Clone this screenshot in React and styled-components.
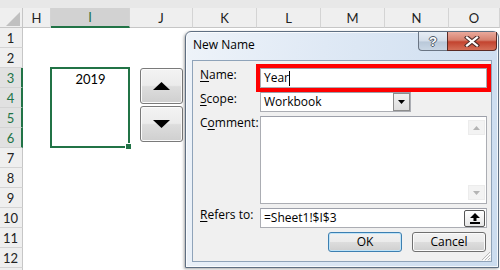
import React from 'react';
import styled, { createGlobalStyle } from 'styled-components';

const GREEN = '#217346';

const columns = [
    { name: 'H', width: '28px' },
    { name: 'I', width: '79px', selected: true },
    { name: 'J', width: '63px' },
    { name: 'K', width: '64px' },
    { name: 'L', width: '64px' },
    { name: 'M', width: '64px' },
    { name: 'N', width: '64px' },
    { name: 'O', width: '1fr' },
];
const rows = Array.from({ length: 12 }, (_, i) => i + 1);
const isSelectedRow = (r) => r >= 3 && r <= 6;

function App() {
    return (
        <Screen>
            <GlobalStyle />
            <Sheet $cols={columns.map((c) => c.width).join(' ')}>
                <TopBand />
                <Corner>
                    <svg width="14" height="14" viewBox="0 0 14 14">
                        <polygon points="14,0 14,14 0,14" fill="#c0c0c0" />
                    </svg>
                </Corner>
                {columns.map((c) => (
                    <ColHeader key={c.name} $selected={c.selected}>{c.name}</ColHeader>
                ))}
                {rows.map((r) => (
                    <RowHeader key={r} $row={r + 2} $selected={isSelectedRow(r)}>{r}</RowHeader>
                ))}
                <RowHeader $row={15} />
                <Cell $col={3} $row={5}>2019</Cell>
                <Selection $col={3} $row={5} $span={4}>
                    <FillHandle />
                </Selection>
            </Sheet>

            <Spinner>
                <SpinButton>
                    <svg width="17" height="8" viewBox="0 0 17 8"><polygon points="8.5,0 17,8 0,8" fill="#000" /></svg>
                </SpinButton>
                <SpinButton>
                    <svg width="17" height="8" viewBox="0 0 17 8"><polygon points="0,0 17,0 8.5,8" fill="#000" /></svg>
                </SpinButton>
            </Spinner>

            <Window>
                <TitleBar>
                    <Title>New Name</Title>
                    <Caption>
                        <HelpButton>?</HelpButton>
                        <CloseButton>
                            <svg width="16" height="11" viewBox="0 0 16 11">
                                <path d="M3 1.5 L13 9.5 M13 1.5 L3 9.5" stroke="#4b2b28" strokeWidth="4.2" strokeLinecap="square" />
                                <path d="M3 1.5 L13 9.5 M13 1.5 L3 9.5" stroke="#fff" strokeWidth="2.2" strokeLinecap="square" />
                            </svg>
                        </CloseButton>
                    </Caption>
                </TitleBar>
                <Client>
                    <Form>
                        <Label><u>N</u>ame:</Label>
                        <TextBox $highlight>
                            <span>Year</span><Caret />
                        </TextBox>

                        <Label><u>S</u>cope:</Label>
                        <Select>
                            <span>Workbook</span>
                            <DropButton>
                                <svg width="7" height="4" viewBox="0 0 7 4"><polygon points="0,0 7,0 3.5,4" fill="#000" /></svg>
                            </DropButton>
                        </Select>

                        <Label>C<u>o</u>mment:</Label>
                        <TextArea>
                            <Scrollbar>
                                <ScrollArrow>
                                    <svg width="7" height="4" viewBox="0 0 7 4"><polygon points="3.5,0 7,4 0,4" fill="#b4b4b4" /></svg>
                                </ScrollArrow>
                                <ScrollArrow>
                                    <svg width="7" height="4" viewBox="0 0 7 4"><polygon points="0,0 7,0 3.5,4" fill="#b4b4b4" /></svg>
                                </ScrollArrow>
                            </Scrollbar>
                        </TextArea>

                        <Label><u>R</u>efers to:</Label>
                        <TextBox>
                            <span>=Sheet1!$I$3</span>
                            <CollapseButton>
                                <svg width="10" height="11" viewBox="0 0 10 11">
                                    <polygon points="5,0 10,5 6.5,5 6.5,8 3.5,8 3.5,5 0,5" fill="#000" />
                                    <rect x="0" y="9" width="10" height="2" fill="#000" />
                                </svg>
                            </CollapseButton>
                        </TextBox>

                        <Buttons>
                            <PushButton $default>OK</PushButton>
                            <PushButton>Cancel</PushButton>
                        </Buttons>
                    </Form>
                    <Grip>
                        <svg width="11" height="11" viewBox="0 0 11 11">
                            <path d="M10 2 L2 10 M10 5 L5 10 M10 8 L8 10" stroke="#b9b9b9" strokeWidth="1" />
                            <path d="M11 3 L3 11 M11 6 L6 11" stroke="#fff" strokeWidth="1" />
                        </svg>
                    </Grip>
                </Client>
            </Window>
        </Screen>
    );
}

export default App;

const GlobalStyle = createGlobalStyle`
    html, body {
        margin: 0;
        padding: 0;
        width: 500px;
        height: 270px;
        overflow: hidden;
        background: #fff;
    }
    body {
        font-family: "Open Sans", "Noto Sans", sans-serif;
    }
`;

const Screen = styled.div`
    position: relative;
    width: 500px;
    height: 270px;
    overflow: hidden;
`;

const Sheet = styled.div`
    display: grid;
    grid-template-columns: 23px ${(p) => p.$cols};
    grid-template-rows: 8px 20px repeat(13, 20px);
    font-family: Lato, "Liberation Sans", sans-serif;
    font-size: 13px;
    color: #222;
`;

const TopBand = styled.div`
    grid-column: 1 / -1;
    grid-row: 1;
    background: #e8e8e8;
`;

const Corner = styled.div`
    grid-column: 1;
    grid-row: 2;
    background: #efefef;
    border-right: 1px solid #c6c6c6;
    border-bottom: 1px solid #c6c6c6;
    display: flex;
    align-items: flex-end;
    justify-content: flex-end;
    padding: 0 2px 1px 0;
`;

const ColHeader = styled.div`
    grid-row: 2;
    display: flex;
    align-items: center;
    justify-content: center;
    background: ${(p) => (p.$selected ? '#d2d2d2' : '#efefef')};
    color: ${(p) => (p.$selected ? GREEN : '#222')};
    border-right: 1px solid #d4d4d4;
    border-bottom: ${(p) => (p.$selected ? `2px solid ${GREEN}` : '1px solid #c6c6c6')};
`;

const RowHeader = styled.div`
    grid-column: 1;
    grid-row: ${(p) => p.$row};
    display: flex;
    align-items: center;
    justify-content: center;
    background: ${(p) => (p.$selected ? '#e1e1e1' : '#efefef')};
    color: ${(p) => (p.$selected ? GREEN : '#222')};
    border-bottom: 1px solid #d4d4d4;
    border-right: ${(p) => (p.$selected ? `2px solid ${GREEN}` : '1px solid #c6c6c6')};
    padding-right: ${(p) => (p.$selected ? '0' : '1px')};
`;

const Cell = styled.div`
    grid-column: ${(p) => p.$col};
    grid-row: ${(p) => p.$row};
    display: flex;
    align-items: center;
    justify-content: center;
    color: #000;
    padding-top: 1px;
`;

const Selection = styled.div`
    grid-column: ${(p) => p.$col};
    grid-row: ${(p) => p.$row} / span ${(p) => p.$span};
    margin: -1px 0 0 -1px;
    border: 2px solid ${GREEN};
    position: relative;
`;

const FillHandle = styled.div`
    position: absolute;
    right: -4px;
    bottom: -4px;
    width: 5px;
    height: 5px;
    background: ${GREEN};
    border: 1px solid #fff;
`;

const Spinner = styled.div`
    position: absolute;
    left: 140px;
    top: 68px;
    width: 43px;
    display: flex;
    flex-direction: column;
    gap: 2px;
`;

const SpinButton = styled.div`
    height: 36px;
    box-sizing: border-box;
    border: 1px solid #7a7a7a;
    border-radius: 3px;
    background: linear-gradient(#f3f3f3 0%, #ebebeb 48%, #dddddd 52%, #cfcfcf 100%);
    box-shadow: inset 0 0 0 1px #fbfbfb;
    display: flex;
    align-items: center;
    justify-content: center;
`;

const Window = styled.div`
    position: absolute;
    left: 185px;
    top: 31px;
    width: 314px;
    height: 237px;
    box-sizing: border-box;
    border: 1px solid #5f6f82;
    border-radius: 6px 6px 0 0;
    background: linear-gradient(100deg, #eef3f9 0%, #dfe9f5 40%, #cbdcef 100%);
    box-shadow: inset 0 0 0 1px rgba(255, 255, 255, 0.75), -1px 1px 3px rgba(0, 0, 0, 0.35);
    padding: 0 6px 5px 6px;
    display: flex;
    flex-direction: column;
    font-family: "Open Sans", "Noto Sans", sans-serif;
    font-size: 12px;
    color: #000;
`;

const TitleBar = styled.div`
    height: 28px;
    display: flex;
    justify-content: space-between;
    align-items: flex-start;
    margin-right: -6px;
`;

const Title = styled.div`
    margin-top: 5px;
    padding-left: 1px;
    line-height: 16px;
    color: #000;
`;

const Caption = styled.div`
    display: flex;
    margin-right: 1px;
    height: 19px;
`;

const CaptionButton = styled.div`
    height: 19px;
    box-sizing: border-box;
    border: 1px solid #6a7584;
    border-top: none;
    display: flex;
    align-items: center;
    justify-content: center;
`;

const HelpButton = styled(CaptionButton)`
    width: 29px;
    border-radius: 0 0 0 4px;
    border-right: none;
    background: linear-gradient(#e7edf4 0%, #d3dde9 50%, #b9c8d9 55%, #c9d6e4 100%);
    color: #fff;
    font-family: "Liberation Sans", sans-serif;
    font-weight: bold;
    font-size: 13px;
    text-shadow: 1px 0 0 #4e5a68, -1px 0 0 #4e5a68, 0 1px 0 #4e5a68, 0 -1px 0 #4e5a68;
`;

const CloseButton = styled(CaptionButton)`
    width: 50px;
    border-radius: 0 0 4px 0;
    border-color: #5a2a24;
    background: linear-gradient(#e9a99c 0%, #d6806e 45%, #c3432f 55%, #d46f58 100%);
`;

const Client = styled.div`
    flex: 1;
    position: relative;
    border: 1px solid #8fa3b9;
    background: #f0f0f0;
    padding: 7px 4px 0 7px;
`;

const Form = styled.div`
    display: grid;
    grid-template-columns: 60px 1fr;
    grid-template-rows: 20px 20px 88px 20px 20px;
    row-gap: 4px;
`;

const Label = styled.div`
    line-height: 14px;
    white-space: nowrap;

    & > u {
        text-underline-offset: 2px;
    }
`;

const Field = styled.div`
    box-sizing: border-box;
    background: #fff;
    border: 1px solid #abadb3;
    border-top-color: #9da0aa;
    display: flex;
    align-items: center;
    padding-left: 3px;
    line-height: 16px;
`;

const TextBox = styled(Field)`
    justify-content: space-between;
    padding-right: 1px;
    outline: ${(p) => (p.$highlight ? '4px solid #ff0000' : 'none')};
`;

const Caret = styled.span`
    display: inline-block;
    width: 1px;
    height: 15px;
    background: #000;
    margin-left: 0;
    margin-right: auto;
`;

const Select = styled(Field)`
    width: 151px;
    justify-content: space-between;
    padding-right: 0;
`;

const DropButton = styled.div`
    width: 17px;
    height: 100%;
    box-sizing: border-box;
    border: 1px solid #8c8c8c;
    background: linear-gradient(#f0f0f0, #dedede);
    display: flex;
    align-items: center;
    justify-content: center;
`;

const TextArea = styled(Field)`
    justify-content: flex-end;
    align-items: stretch;
    padding: 0;
`;

const Scrollbar = styled.div`
    width: 17px;
    padding: 3px 1px;
    display: flex;
    flex-direction: column;
    justify-content: space-between;
`;

const ScrollArrow = styled.div`
    height: 13px;
    background: #f3f3f3;
    border: 1px solid #ececec;
    display: flex;
    align-items: center;
    justify-content: center;
`;

const CollapseButton = styled.div`
    width: 21px;
    height: 17px;
    box-sizing: border-box;
    border: 1px solid #555;
    border-radius: 2px;
    background: linear-gradient(#ffffff, #e6e6e6);
    display: flex;
    align-items: center;
    justify-content: center;
`;

const Buttons = styled.div`
    grid-column: 1 / -1;
    display: flex;
    justify-content: flex-end;
    gap: 10px;
    padding-right: 1px;
`;

const PushButton = styled.div`
    width: 74px;
    box-sizing: border-box;
    border: 1px solid ${(p) => (p.$default ? '#3c7fb1' : '#707070')};
    border-radius: 3px;
    background: linear-gradient(#f2f2f2 0%, #ebebeb 48%, #dddddd 52%, #cfcfcf 100%);
    box-shadow: inset 0 0 0 1px ${(p) => (p.$default ? '#bfe3f7' : '#fbfbfb')};
    display: flex;
    align-items: center;
    justify-content: center;
    line-height: 16px;
`;

const Grip = styled.div`
    position: absolute;
    right: 0;
    bottom: 0;
    display: flex;
`;
